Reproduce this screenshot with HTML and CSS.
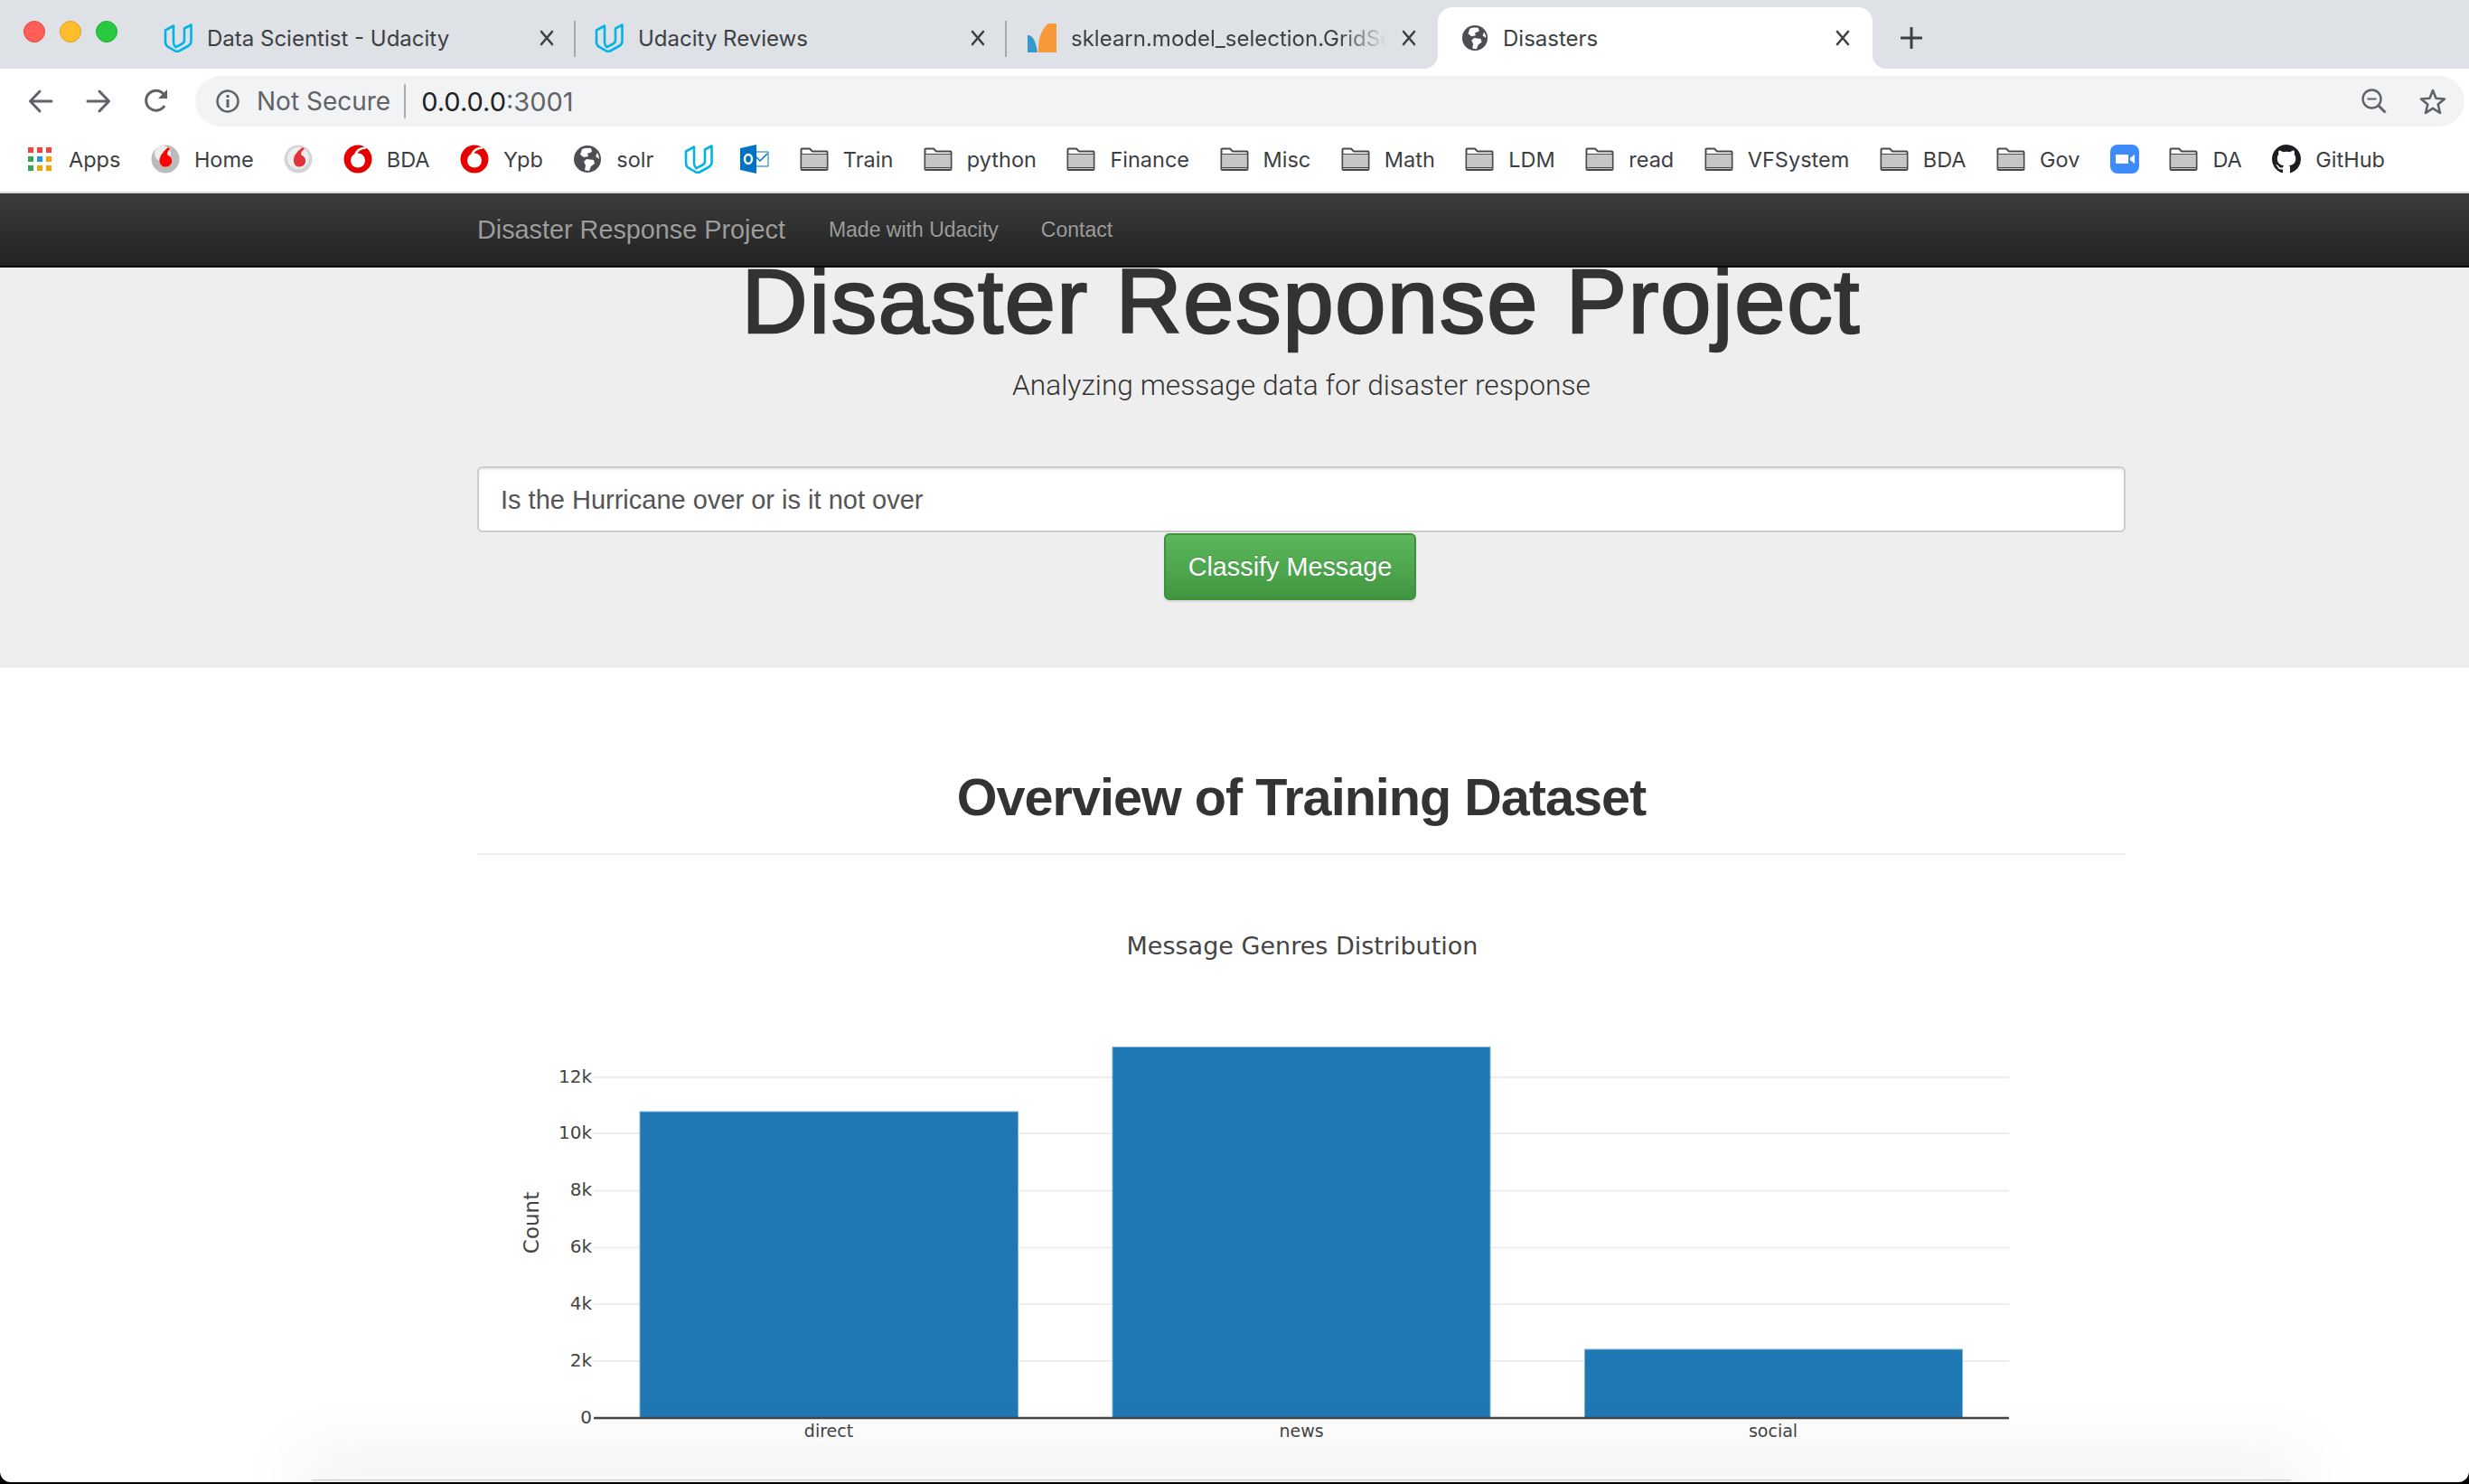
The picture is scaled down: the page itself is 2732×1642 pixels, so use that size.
FILE: index.html
```html
<!DOCTYPE html>
<html lang="en">
<head>
    <meta charset="UTF-8">
    <title>Disasters</title>
    <link rel="stylesheet" href="styles.css">
</head>
<body>
    <svg class="defs" width="0" height="0" aria-hidden="true">
        <symbol id="udacity" viewBox="0 0 32 32">
            <path d="M2 7.5V20.5Q2 24 5 25.8L13 30.5Q15 31.4 17 30.5L27 25Q30.5 23 30.5 19.5V1.500L23 5.500V18.500Q23 21 20.500 22.500L13.500 26.200Q11 24 11 20.500V2.500Z" fill="none" stroke="#02b3e4" stroke-width="2.600" stroke-linejoin="round"/>
        </symbol>
        <symbol id="globe" viewBox="0 0 32 32">
            <circle cx="16" cy="16" r="15" fill="#4b4f54"/>
            <path d="M10 5Q14 3 20 4L21 8L16 10L17 13L12 14L8 11ZM15 16L23 17L24 21L20 24L18 29Q15 29 13 28L14 23L12 19ZM27 9Q29 12 29 16L25 13Z" fill="#fff"/>
        </symbol>
        <symbol id="folder" viewBox="0 0 32 26">
            <path d="M1.500 24V2.500Q1.500 1.500 2.500 1.500H11L14 4.500H29.500Q30.500 4.500 30.500 5.500V24Q30.500 25 29.500 25H2.500Q1.500 25 1.500 24Z" fill="#fff" stroke="#4a4a4a" stroke-width="2"/>
            <path d="M2.500 8H29.500V24H2.500Z" fill="#c6c6c6"/>
            <path d="M2 7.500H30M2 22.500H30" stroke="#4a4a4a" stroke-width="1"/>
        </symbol>
        <symbol id="vodafone" viewBox="0 0 32 32">
            <circle cx="16" cy="16" r="15.500" fill="#e60000"/>
            <circle cx="16" cy="17.500" r="8" fill="#fff"/>
            <path d="M25 3.500Q16 4 13.500 10.500" fill="none" stroke="#fff" stroke-width="2.600"/>
        </symbol>
        <symbol id="close" viewBox="0 0 18 18">
            <path d="M3 2L15 16M15 2L3 16" stroke="#3c4043" stroke-width="2.600" stroke-linecap="round"/>
        </symbol>
    </svg>

    <div class="window">
        <div class="tabstrip">
            <div class="lights">
                <span class="light light-red"></span>
                <span class="light light-yellow"></span>
                <span class="light light-green"></span>
            </div>
            <div class="tab">
                <svg class="favicon"><use href="#udacity"/></svg>
                <span class="tab-title">Data Scientist - Udacity</span>
                <svg class="tab-close"><use href="#close"/></svg>
            </div>
            <div class="tab">
                <svg class="favicon"><use href="#udacity"/></svg>
                <span class="tab-title">Udacity Reviews</span>
                <svg class="tab-close"><use href="#close"/></svg>
            </div>
            <div class="tab tab-last">
                <svg class="favicon" viewBox="0 0 32 32">
                    <path d="M0 32V13Q8 12 11 32Z" fill="#3499cd"/>
                    <path d="M12 32Q11 10 23 0H32V32Z" fill="#f89939"/>
                </svg>
                <span class="tab-title tab-title-fade">sklearn.model_selection.GridSe</span>
                <svg class="tab-close"><use href="#close"/></svg>
            </div>
            <div class="tab tab-active">
                <svg class="favicon favicon-small"><use href="#globe"/></svg>
                <span class="tab-title">Disasters</span>
                <svg class="tab-close"><use href="#close"/></svg>
            </div>
            <svg class="new-tab" viewBox="0 0 24 24"><path d="M12 1V23M1 12H23" stroke="#3c4043" stroke-width="3" stroke-linecap="round"/></svg>
        </div>

        <div class="toolbar">
            <svg class="nav-icon" viewBox="0 0 28 28"><path d="M26 14H3M13 3L2.500 14L13 25" fill="none" stroke="#5f6368" stroke-width="3" stroke-linecap="round" stroke-linejoin="round"/></svg>
            <svg class="nav-icon" viewBox="0 0 28 28"><path d="M2 14H25M15 3L25.500 14L15 25" fill="none" stroke="#5f6368" stroke-width="3" stroke-linecap="round" stroke-linejoin="round"/></svg>
            <svg class="nav-icon" viewBox="0 0 28 28"><path d="M23 19A11 11 0 1 1 22 6" fill="none" stroke="#5f6368" stroke-width="3"/><path d="M26 1V11H16Z" fill="#5f6368"/></svg>
            <div class="omnibox">
                <svg class="info-icon" viewBox="0 0 26 26"><circle cx="13" cy="13" r="11.500" fill="none" stroke="#5f6368" stroke-width="2.400"/><path d="M13 11V20M13 6V9" stroke="#5f6368" stroke-width="3"/></svg>
                <span class="not-secure">Not Secure</span>
                <span class="url"><b>0.0.0.0</b>:3001</span>
                <svg class="zoom-icon" viewBox="0 0 28 28"><circle cx="11.500" cy="11.500" r="10" fill="none" stroke="#5f6368" stroke-width="2.400"/><path d="M6.500 11.500H16.500" stroke="#5f6368" stroke-width="2"/><path d="M18.500 18.500L26.500 26.500" stroke="#5f6368" stroke-width="3"/></svg>
                <svg class="star-icon" viewBox="0 0 30 30"><path d="M15 3L18.500 11.800L28 12.500L20.700 18.500L23 28L15 22.800L7 28L9.300 18.500L2 12.500L11.500 11.800Z" fill="none" stroke="#5f6368" stroke-width="2.600" stroke-linejoin="round"/></svg>
            </div>
        </div>

        <div class="bookmarks">
            <span class="mark">
                <svg class="apps-icon" viewBox="0 0 26 26">
                    <rect width="6" height="6" fill="#f44336"/><rect x="10" width="6" height="6" fill="#f44336"/><rect x="20" width="6" height="6" fill="#f44336"/>
                    <rect y="10" width="6" height="6" fill="#34a853"/><rect x="10" y="10" width="6" height="6" fill="#2196f3"/><rect x="20" y="10" width="6" height="6" fill="#f4a300"/>
                    <rect y="20" width="6" height="6" fill="#34a853"/><rect x="10" y="20" width="6" height="6" fill="#f4a300"/><rect x="20" y="20" width="6" height="6" fill="#f4a300"/>
                </svg>Apps
            </span>
            <span class="mark">
                <svg class="mark-icon" viewBox="0 0 32 32"><circle cx="16" cy="16" r="15.500" fill="#bbb"/><circle cx="13" cy="10" r="9" fill="#eee"/><path d="M19 3Q15 6 11 12Q7 20 13 24Q20 26 23 20Q24 14 18 11Q18 7 21 5Z" fill="#f00"/></svg>Home
            </span>
            <span class="mark">
                <svg class="mark-icon" viewBox="0 0 32 32"><circle cx="16" cy="16" r="15.500" fill="#d5d5d8"/><circle cx="16" cy="15" r="12" fill="#eee"/><path d="M21 3Q16 6 12 12Q9 20 14 24Q21 26 24 20Q25 14 19 11Q19 7 23 5Z" fill="#e3333a"/></svg>
            </span>
            <span class="mark"><svg class="mark-icon"><use href="#vodafone"/></svg>BDA</span>
            <span class="mark"><svg class="mark-icon"><use href="#vodafone"/></svg>Ypb</span>
            <span class="mark"><svg class="mark-icon"><use href="#globe"/></svg>solr</span>
            <span class="mark"><svg class="mark-icon"><use href="#udacity"/></svg></span>
            <span class="mark mark-tight">
                <svg class="mark-icon" viewBox="0 0 32 32"><path d="M13 8H31V24H13Z" fill="#fff" stroke="#0072c6"/><path d="M17 13L22 18L30 10" fill="none" stroke="#0072c6" stroke-width="1.500"/><path d="M0 4L18 0V32L0 28Z" fill="#0072c6"/><ellipse cx="9" cy="16" rx="4" ry="5" fill="none" stroke="#fff" stroke-width="2.500"/></svg>
            </span>
            <span class="mark"><svg class="mark-icon"><use href="#folder"/></svg>Train</span>
            <span class="mark"><svg class="mark-icon"><use href="#folder"/></svg>python</span>
            <span class="mark"><svg class="mark-icon"><use href="#folder"/></svg>Finance</span>
            <span class="mark"><svg class="mark-icon"><use href="#folder"/></svg>Misc</span>
            <span class="mark"><svg class="mark-icon"><use href="#folder"/></svg>Math</span>
            <span class="mark"><svg class="mark-icon"><use href="#folder"/></svg>LDM</span>
            <span class="mark"><svg class="mark-icon"><use href="#folder"/></svg>read</span>
            <span class="mark"><svg class="mark-icon"><use href="#folder"/></svg>VFSystem</span>
            <span class="mark"><svg class="mark-icon"><use href="#folder"/></svg>BDA</span>
            <span class="mark"><svg class="mark-icon"><use href="#folder"/></svg>Gov</span>
            <span class="mark">
                <svg class="mark-icon" viewBox="0 0 32 32"><rect width="32" height="32" rx="8" fill="#3d8bfd"/><path d="M6 11H19Q20 11 20 12V21H8Q6 21 6 20ZM22 15L27 11V21L22 17Z" fill="#fff"/></svg>
            </span>
            <span class="mark"><svg class="mark-icon"><use href="#folder"/></svg>DA</span>
            <span class="mark">
                <svg class="mark-icon" viewBox="0 0 16 16"><path fill="#1b1f23" d="M8 0C3.580 0 0 3.580 0 8c0 3.540 2.290 6.530 5.470 7.590.4.070.55-.17.55-.38 0-.19-.01-.82-.01-1.490-2.010.37-2.530-.49-2.690-.94-.09-.23-.48-.94-.82-1.130-.28-.15-.68-.52-.01-.53.63-.01 1.080.58 1.230.82.72 1.210 1.870.87 2.330.66.07-.52.28-.87.51-1.070-1.780-.2-3.640-.89-3.640-3.950 0-.87.31-1.590.82-2.150-.08-.2-.36-1.020.08-2.120 0 0 .67-.21 2.200.82.64-.18 1.320-.27 2-.27.68 0 1.360.09 2 .27 1.530-1.040 2.200-.82 2.200-.82.44 1.100.16 1.920.08 2.120.51.56.82 1.270.82 2.150 0 3.070-1.870 3.750-3.650 3.950.29.25.54.73.54 1.480 0 1.070-.01 1.930-.01 2.200 0 .21.15.46.55.38A8.013 8.013 0 0016 8c0-4.420-3.580-8-8-8z"/></svg>GitHub
            </span>
        </div>

        <nav class="navbar">
            <div class="container navbar-inner">
                <a class="navbar-brand">Disaster Response Project</a>
                <a class="nav-link">Made with Udacity</a>
                <a class="nav-link">Contact</a>
            </div>
        </nav>

        <section class="jumbotron">
            <div class="container">
                <h1 class="page-title">Disaster Response Project</h1>
                <p class="page-sub">Analyzing message data for disaster response</p>
                <form class="message-form">
                    <input class="message-input" type="text" value="Is the Hurricane over or is it not over">
                    <button class="btn-classify" type="button">Classify Message</button>
                </form>
            </div>
        </section>

        <main class="container">
            <div class="page-header">
                <h2>Overview of Training Dataset</h2>
            </div>
            <svg class="chart" viewBox="0 0 1824 700" width="1824" height="700">
                <text class="chart-title" x="912" y="28" text-anchor="middle">Message Genres Distribution</text>

                <path class="gridlines" d="M128 164H1694M128 226H1694M128 289.500H1694M128 352.500H1694M128 415H1694M128 478H1694"/>

                <rect class="bar" x="179" y="202" width="418.500" height="339"/>
                <rect class="bar" x="702" y="130.500" width="418" height="410.500"/>
                <rect class="bar" x="1224.500" y="465" width="418" height="76"/>
                <line class="zero-line" x1="128" x2="1694" y1="541" y2="541"/>

                <g class="tick-y" text-anchor="end">
                    <text x="126" y="170">12k</text>
                    <text x="126" y="232">10k</text>
                    <text x="126" y="295">8k</text>
                    <text x="126" y="358">6k</text>
                    <text x="126" y="421">4k</text>
                    <text x="126" y="484">2k</text>
                    <text x="126" y="547">0</text>
                </g>
                <g class="tick-x" text-anchor="middle">
                    <text x="388" y="562">direct</text>
                    <text x="911" y="562">news</text>
                    <text x="1433" y="562">social</text>
                </g>
                <text class="axis-title" transform="translate(67 325) rotate(-90)" text-anchor="middle">Count</text>
                <text class="axis-title" x="911" y="626" text-anchor="middle">Genre</text>
            </svg>
        </main>

        <div class="dock"></div>
    </div>
</body>
</html>
```

FILE: styles.css
```css
:root {
    --chrome-bg: #dee1e6;
    --chrome-text: #3c4043;
    --omnibox-bg: #f1f3f4;
    --page-text: #333;
    --ui-font: Inter, "Liberation Sans", sans-serif;
    --page-font: "Liberation Sans", Arial, sans-serif;
}

html, body { margin: 0; padding: 0; background: #000; overflow: hidden; }
body { width: 2732px; height: 1642px; font-family: var(--page-font); color: var(--page-text); }

.defs { position: absolute; }

.window {
    position: relative;
    height: 1640px;
    background: #fff;
    overflow: hidden;
    border-radius: 0 0 12px 12px;
}

/* tab strip */
.tabstrip {
    display: flex;
    align-items: flex-end;
    height: 76px;
    background: var(--chrome-bg);
    font-family: var(--ui-font);
    font-size: 24px;
    color: var(--chrome-text);
}

.lights {
    display: flex;
    gap: 16px;
    width: 160px;
    padding: 23px 0 0 26px;
    box-sizing: border-box;
    align-self: flex-start;
}

.light { width: 24px; height: 24px; border-radius: 50%; box-sizing: border-box; }
.light-red { background: #ff5f57; border: 1px solid #e2463f; }
.light-yellow { background: #ffbd2e; border: 1px solid #e1a116; }
.light-green { background: #28c93f; border: 1px solid #1dad2b; }

.tab {
    position: relative;
    display: flex;
    align-items: center;
    box-sizing: border-box;
    width: 477px;
    height: 68px;
    padding: 0 23px 0 21px;
}

.tab:not(.tab-active):not(.tab-last)::after {
    content: "";
    position: absolute;
    right: 0;
    top: 15px;
    height: 40px;
    border-right: 2px solid #a5a8ac;
}

.tab-last { padding-left: 23px; }

.tab-active {
    background: #fff;
    border-radius: 16px 16px 0 0;
    padding: 0 24px 0 26px;
    width: 481px;
}

.tab-active::before, .tab-active::after {
    content: "";
    position: absolute;
    bottom: 0;
    width: 16px;
    height: 16px;
}
.tab-active::before { left: -16px; background: radial-gradient(circle at 0 0, transparent 16px, #fff 16.500px); }
.tab-active::after { right: -16px; background: radial-gradient(circle at 100% 0, transparent 16px, #fff 16.500px); }

.favicon { width: 32px; height: 32px; flex: none; margin-right: 16px; }
.favicon-small { width: 30px; height: 30px; margin-right: 16px; }

.tab-title { flex: 1; min-width: 0; white-space: nowrap; overflow: hidden; }
.tab-title-fade { -webkit-mask-image: linear-gradient(to right, #000 85%, transparent 100%); mask-image: linear-gradient(to right, #000 85%, transparent 100%); }

.tab-close { width: 18px; height: 18px; flex: none; margin-left: 16px; }

.new-tab { width: 24px; height: 24px; margin: 0 0 22px 31px; }

/* toolbar */
.toolbar {
    display: flex;
    align-items: flex-end;
    height: 64px;
    padding-left: 31px;
    box-sizing: border-box;
    background: #fff;
}

.nav-icon { width: 28px; height: 28px; margin: 0 36px 14px 0; flex: none; }
.nav-icon:nth-child(3) { margin-right: 29px; }

.omnibox {
    display: flex;
    align-items: center;
    width: 2511px;
    height: 56px;
    padding-left: 23px;
    box-sizing: border-box;
    background: var(--omnibox-bg);
    border-radius: 28px;
    font-family: var(--ui-font);
    font-size: 28px;
}

.info-icon { width: 26px; height: 26px; margin-right: 19px; flex: none; }
.not-secure { color: #5f6368; padding-right: 15px; border-right: 2px solid #a8abaf; line-height: 38px; }
.url { color: #5f6368; margin-left: 17px; flex: 1; font-size: 29px; }
.url b { font-weight: 400; color: #202124; }
.zoom-icon { width: 28px; height: 28px; margin-right: 36px; flex: none; }
.star-icon { width: 30px; height: 30px; margin-right: 20px; flex: none; }

/* bookmarks */
.bookmarks {
    display: flex;
    align-items: center;
    gap: 33.500px;
    height: 74px;
    padding-left: 31px;
    box-sizing: border-box;
    background: #fff;
    border-bottom: 2px solid #d9dadc;
    font-family: var(--ui-font);
    font-size: 23.500px;
    color: var(--chrome-text);
    white-space: nowrap;
}

.mark { display: flex; align-items: center; gap: 16px; }
.mark-tight { margin-left: -3px; }
.mark-icon { width: 32px; height: 32px; flex: none; }
.apps-icon { width: 26px; height: 26px; flex: none; margin-right: 3px; }

.container { width: 1824px; margin-left: 528px; }

.navbar {
    height: 80px;
    background: linear-gradient(to bottom, #3c3c3c, #222);
    border-bottom: 2px solid #080808;
}

.navbar-inner { display: flex; align-items: center; height: 100%; }
.navbar-brand { font-size: 28.800px; color: #9d9d9d; margin-right: 48px; text-shadow: 0 -1px 0 rgba(0, 0, 0, .25); }
.nav-link { font-size: 23px; color: #9d9d9d; margin-right: 47px; text-shadow: 0 -1px 0 rgba(0, 0, 0, .25); }

.jumbotron {
    height: 443px;
    background: #eee;
    overflow: hidden;
    text-align: center;
}

.page-title {
    margin: -18px 0 0;
    font-size: 100.800px;
    font-weight: 400;
    line-height: 111px;
    letter-spacing: 1.800px;
    -webkit-text-stroke: 2.500px var(--page-text);
    color: var(--page-text);
}

.page-sub {
    margin: 16px 0 0;
    font-family: Roboto, var(--page-font);
    font-weight: 300;
    font-size: 31.700px;
    line-height: 44px;
}

.message-form { margin-top: 67px; text-align: left; }

.message-input {
    display: block;
    width: 100%;
    height: 73px;
    box-sizing: border-box;
    padding: 2px 24px 0;
    border: 2px solid #ccc;
    border-radius: 6px;
    background: #fff;
    font-family: var(--page-font);
    font-size: 29px;
    color: #555;
    box-shadow: inset 0 2px 2px rgba(0, 0, 0, .075);
}

.btn-classify {
    display: block;
    width: 279px;
    height: 74px;
    margin: 1px 0 0 41.666%;
    border: 2px solid #3e8f3e;
    border-radius: 6px;
    background: linear-gradient(to bottom, #5cb85c, #419641);
    color: #fff;
    font-family: var(--page-font);
    font-size: 28.800px;
    text-shadow: 0 -1px 0 rgba(0, 0, 0, .2);
    box-shadow: 0 2px 2px rgba(0, 0, 0, .1);
}

.page-header {
    padding-top: 111px;
    border-bottom: 2px solid #eee;
    text-align: center;
}

.page-header h2 {
    margin: 0;
    font-size: 57.600px;
    font-weight: 700;
    line-height: 64px;
    letter-spacing: -1px;
    padding-bottom: 30px;
}

/* plotly chart */
.chart { display: block; margin: 82px 0 0 1px; font-family: "DejaVu Sans", sans-serif; fill: #444; }
.chart-title { font-size: 27px; }
.gridlines { stroke: #eee; stroke-width: 2; fill: none; }
.bar { fill: #1f77b4; stroke: #7fb4d8; stroke-width: 1; }
.zero-line { stroke: #444; stroke-width: 2.500; }
.tick-y text { font-size: 20px; }
.tick-x text { font-size: 19px; }
.axis-title { font-size: 23px; }

/* dock shadow along the bottom edge */
.dock {
    position: absolute;
    left: 345px;
    width: 2190px;
    bottom: 0;
    height: 2px;
    background: #eee;
    border-top: 1px solid #ccc;
    box-shadow: 0 0 80px 14px rgba(0, 0, 0, .12);
}
```
